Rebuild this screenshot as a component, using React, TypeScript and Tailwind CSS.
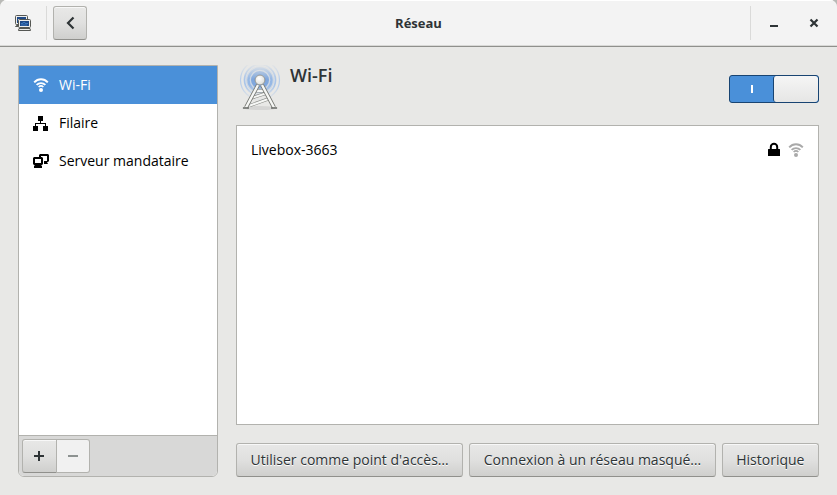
import type { ReactNode } from "react";

const WifiIcon = ({ className = "" }: { className?: string }) => (
  <svg viewBox="0 0 16 16" className={`w-4 h-4 ${className}`} fill="none" stroke="currentColor" aria-hidden="true">
    <path d="M1.2 5.4C5 1.3 11 1.3 14.8 5.4" strokeWidth="2" />
    <path d="M3.6 7.9c2.5-2.5 6.3-2.5 8.8 0" strokeWidth="1.8" />
    <path d="M5.6 10c1.4-1.3 3.4-1.3 4.8 0" strokeWidth="1.6" />
    <circle cx="8" cy="13" r="2" fill="currentColor" stroke="none" />
  </svg>
);

const WiredIcon = () => (
  <svg viewBox="0 0 16 16" className="w-4 h-4" fill="currentColor" aria-hidden="true">
    <path d="M5 1h5v5H8v2h5v3h2v5h-5v-5h2V9H3v2h2v5H0v-5h2V8h5V6H5z" />
  </svg>
);

const ProxyIcon = () => (
  <svg viewBox="0 0 16 16" className="w-4 h-4" fill="currentColor" aria-hidden="true">
    <path d="M7 1h8l1 1v6l-1 1h-1l1 2h-4V8h3V3H8v1H6V2z" />
    <path fillRule="evenodd" d="M1 4h8l1 1v6l-1 1H8l1 1v2H1v-2l1-1H1l-1-1V5zm1 2v4h6V6z" />
  </svg>
);

const LockIcon = () => (
  <svg viewBox="0 0 16 16" className="w-4 h-4" aria-label="Réseau sécurisé" role="img">
    <path d="M4.8 8V5a3.2 3.2 0 0 1 6.4 0v3" fill="none" stroke="currentColor" strokeWidth="2" />
    <rect x="2" y="7" width="12" height="7" rx="0.5" fill="currentColor" />
  </svg>
);

const NetworkLogo = () => (
  <svg viewBox="0 0 16 16" className="w-4 h-4" aria-hidden="true">
    <g stroke="#555753">
      <rect x="0.5" y="0.5" width="12" height="9" rx="1" fill="#eeeeec" />
      <path d="M0.5 11.5h4v-1h-3z" fill="#d3d7cf" />
      <rect x="3.5" y="4.5" width="12" height="8" rx="1" fill="#eeeeec" />
      <path d="M4 13.5h11l.5 2h-12z" fill="#eeeeec" />
    </g>
    <path d="M2 2h9v2H3v4H2z" fill="#204a87" />
    <rect x="5" y="6" width="9" height="5" fill="#204a87" />
    <path d="M6 8.5h2v-1h2v1h3M6 10h6" stroke="#3b77bd" fill="none" />
  </svg>
);

const AntennaIcon = () => (
  <svg viewBox="0 0 48 48" className="w-12 h-12 shrink-0" fill="none" aria-hidden="true">
    <defs>
      <linearGradient id="wavesFade" x1="0" y1="0" x2="0" y2="1">
        <stop offset="0.05" stopColor="#fff" stopOpacity="0" />
        <stop offset="0.45" stopColor="#fff" stopOpacity="0.9" />
        <stop offset="0.6" stopColor="#fff" stopOpacity="0.9" />
        <stop offset="1" stopColor="#fff" stopOpacity="0" />
      </linearGradient>
      <mask id="wavesMask" maskUnits="userSpaceOnUse" x="0" y="-4" width="48" height="40">
        <rect x="0" y="-4" width="48" height="40" fill="url(#wavesFade)" />
      </mask>
      <radialGradient id="ball" cx="0.4" cy="0.35" r="0.7">
        <stop offset="0" stopColor="#fff" />
        <stop offset="1" stopColor="#d8dad6" />
      </radialGradient>
    </defs>
    <g mask="url(#wavesMask)">
      <circle cx="24" cy="15" r="14" fill="#7ba6e0" fillOpacity="0.3" />
      <circle cx="24" cy="15" r="19.5" stroke="#b3cbeb" strokeWidth="1.2" />
      <circle cx="24" cy="15" r="15.5" stroke="#a3c1e9" strokeWidth="1.7" />
      <circle cx="24" cy="15" r="11.5" stroke="#8cb2e4" strokeWidth="2.3" />
      <circle cx="24" cy="15" r="7" stroke="#74a0dc" strokeWidth="4" />
    </g>
    <ellipse cx="24" cy="43" rx="18" ry="2" fill="#000" fillOpacity="0.08" />
    <path d="M19 26h10M15.5 33 31 28M14 40.5 35 33" stroke="#858783" strokeWidth="3.2" />
    <path d="M19 26h10M15.5 33 31 28M14 40.5 35 33" stroke="#f6f7f5" strokeWidth="2" />
    <path d="M22 20 10 42.5M26 20l12 22.5" stroke="#777974" strokeWidth="4" />
    <path d="M22 20 10 42.5M26 20l12 22.5" stroke="#f6f7f5" strokeWidth="2.4" />
    <path d="M7 43h6M35 43h6" stroke="#6b6d69" strokeWidth="1.6" />
    <circle cx="24" cy="15" r="4.9" fill="url(#ball)" stroke="#858783" strokeWidth="0.8" />
  </svg>
);

const raised =
  "border border-[#b2b2ae] border-b-[#90908c] bg-gradient-to-b from-[#e8e8e7] via-[#e0e0df] to-[#cfcfcd] shadow-[inset_0_1px_#f8f8f8]";

const ActionButton = ({ children }: { children: ReactNode }) => (
  <button type="button" className={`h-[34px] px-3 grow rounded-[3px] whitespace-nowrap [text-shadow:0_1px_#fff] ${raised}`}>
    {children}
  </button>
);

const connections = [
  { label: "Wi-Fi", icon: <WifiIcon />, selected: true },
  { label: "Filaire", icon: <WiredIcon />, selected: false },
  { label: "Serveur mandataire", icon: <ProxyIcon />, selected: false },
];

const App = () => {
  return (
    <div className="bg-[#b9bab7]">
      <div className="min-h-screen flex flex-col bg-[#e8e8e6] text-[#2e3436] text-sm leading-5 font-['Open_Sans','Noto_Sans',sans-serif] rounded-t-[7px] overflow-hidden">
        {/* Title bar */}
        <header className="h-[47px] grid grid-cols-[1fr_auto_1fr] items-center bg-[#f3f3f3] border-b border-[#8f908c] shadow-[inset_0_1px_#fff,inset_0_-1px_#d8d8d6]">
          <div className="flex items-center gap-1.5 pl-[15px]">
            <NetworkLogo />
            <div className="w-px h-[34px] ml-[9px] bg-[#dadad9]"></div>
            <button type="button" aria-label="Retour" className={`w-[34px] h-[34px] flex items-center justify-center rounded-[3px] ${raised}`}>
              <svg viewBox="0 0 16 16" className="w-4 h-4" fill="none" stroke="currentColor" strokeWidth="2.2">
                <path d="M11.5 2.5 6 8l5.5 5.5" />
              </svg>
            </button>
          </div>
          <h1 className="font-bold text-[13px]">Réseau</h1>
          <div className="flex items-center justify-end pr-[15px]">
            <div className="w-px h-[34px] mr-[15px] bg-[#dadad9]"></div>
            <button type="button" aria-label="Réduire" className="w-4 h-4 mr-6">
              <svg viewBox="0 0 16 16" className="w-4 h-4" fill="currentColor">
                <path d="M4 10h8v2H4z" />
              </svg>
            </button>
            <button type="button" aria-label="Fermer" className="w-4 h-4">
              <svg viewBox="0 0 16 16" className="w-4 h-4" fill="none" stroke="currentColor" strokeWidth="2.2">
                <path d="m4.5 4.5 7 7m0-7-7 7" />
              </svg>
            </button>
          </div>
        </header>

        <main className="flex-1 flex gap-[18px] p-[18px]">
          {/* Connection list */}
          <aside className="w-[200px] shrink-0 flex flex-col border border-[#b2b2ae] rounded-b-md overflow-hidden bg-white text-black">
            <ul className="flex-1">
              {connections.map(({ label, icon, selected }) => (
                <li key={label}>
                  <button
                    type="button"
                    aria-pressed={selected}
                    className={`w-full h-[38px] flex items-center gap-2.5 pl-3.5 ${selected ? "bg-[#4a90d9] text-white" : ""}`}
                  >
                    {icon}
                    {label}
                  </button>
                </li>
              ))}
            </ul>
            <div className="flex p-[3px] bg-[#d8d8d7] border-t border-[#b2b2ae] text-[#2e3436]">
              <button type="button" aria-label="Ajouter" className={`w-[35px] h-[34px] flex items-center justify-center rounded-l-[3px] ${raised}`}>
                <svg viewBox="0 0 16 16" className="w-4 h-4" fill="currentColor">
                  <path d="M6 3h2v4h4v2H8v4H6V9H2V7h4z" />
                </svg>
              </button>
              <button type="button" aria-label="Supprimer" disabled className="w-[33px] h-[34px] flex items-center justify-center rounded-r-[3px] border border-l-0 border-[#b2b2ae] bg-[#f1f1f1] text-[#8d9291]">
                <svg viewBox="0 0 16 16" className="w-4 h-4" fill="currentColor">
                  <path d="M3 7h10v2H3z" />
                </svg>
              </button>
            </div>
          </aside>

          {/* Wi-Fi panel */}
          <section className="flex-1 min-w-0 flex flex-col">
            <div className="flex mb-3">
              <AntennaIcon />
              <h2 className="ml-1.5 font-semibold text-lg leading-5">
                <label htmlFor="wifi">Wi-Fi</label>
              </h2>
              <div className="relative ml-auto self-center w-[90px] h-7 flex rounded-[3px] border border-[#184472] bg-[#4a90d9] overflow-hidden">
                <div className="flex-1 flex items-center justify-center">
                  <div className="w-0.5 h-2 bg-white"></div>
                </div>
                <div className="w-[45px] rounded-[3px] border-l border-[#184472] bg-gradient-to-b from-[#f5f5f5] to-[#e6e6e5]"></div>
                <input id="wifi" type="checkbox" role="switch" defaultChecked className="absolute inset-0 w-full h-full opacity-0" />
              </div>
            </div>

            <ul className="flex-1 bg-white border border-[#b2b2ae] text-black">
              <li className="h-12 flex items-center gap-1.5 px-3.5">
                <span className="flex-1">Livebox-3663</span>
                <LockIcon />
                <WifiIcon className="text-[#a9a9a9]" />
              </li>
            </ul>

            <div className="flex gap-1.5 mt-[18px]">
              <ActionButton>Utiliser comme point d'accès…</ActionButton>
              <ActionButton>Connexion à un réseau masqué…</ActionButton>
              <ActionButton>Historique</ActionButton>
            </div>
          </section>
        </main>
      </div>
    </div>
  );
};

export default App;
